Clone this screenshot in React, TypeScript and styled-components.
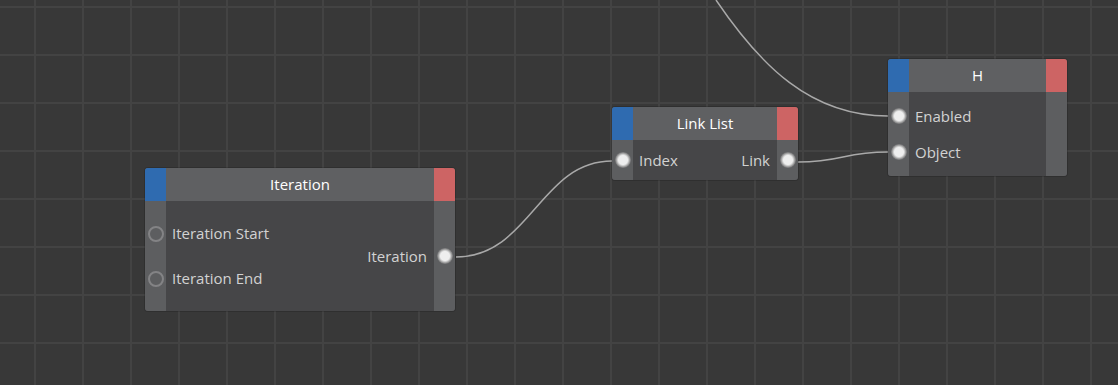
import React from "react";
import styled, {createGlobalStyle} from "styled-components";

const GlobalStyle = createGlobalStyle`
  html, body {
    margin: 0;
    padding: 0;
    background: #383838;
  }
  body {
    font-family: "Open Sans", "Noto Sans", sans-serif;
  }
`;

// canvas with the 48px grid
const Canvas = styled.div`
  position: relative;
  width: 1118px;
  height: 385px;
  overflow: hidden;
  background-color: #383838;
  background-image: linear-gradient(to right, #434343 0 2px, transparent 2px),
  linear-gradient(to bottom, #434343 0 2px, transparent 2px);
  background-size: 48px 48px;
  background-position: 34px 6px;
`;

const Wires = styled.svg`
  position: absolute;
  inset: 0;
  width: 100%;
  height: 100%;

  path {
    fill: none;
    stroke: #a9a9a9;
    stroke-width: 1.5;
  }
`;

const NodeBox = styled.div<{ $x: number; $y: number; $w: number; $h: number }>`
  position: absolute;
  left: ${p => p.$x}px;
  top: ${p => p.$y}px;
  width: ${p => p.$w}px;
  height: ${p => p.$h}px;
  display: flex;
  flex-direction: column;
  border-radius: 3px;
  overflow: hidden;
  box-shadow: 0 0 0 1px rgba(0, 0, 0, 0.15);
`;

const Header = styled.div`
  display: grid;
  grid-template-columns: 21px 1fr 21px;
  height: 33px;
  flex: none;
  background: #5f6062;
`;

const Tab = styled.div<{ $kind: "in" | "out" }>`
  background: ${p => p.$kind === "in" ? "#2f6bb0" : "#cd6464"};
`;

const Title = styled.div`
  display: flex;
  align-items: center;
  justify-content: center;
  color: #ffffff;
  font-size: 15px;
  padding-bottom: 1px;
`;

const Body = styled.div`
  flex: 1;
  display: flex;
  background: #464648;
`;

const PortColumn = styled.div`
  width: 21px;
  flex: none;
  display: flex;
  flex-direction: column;
  justify-content: center;
  align-items: center;
  background: #5d5e60;
`;

const LabelColumn = styled.div<{ $side: "left" | "right" }>`
  flex: ${p => p.$side === "left" ? 1 : "none"};
  display: flex;
  flex-direction: column;
  justify-content: center;
  align-items: ${p => p.$side === "left" ? "flex-start" : "flex-end"};
  padding: ${p => p.$side === "left" ? "0 0 0 6px" : "0 7px 0 0"};
`;

const Row = styled.div<{ $h: number }>`
  height: ${p => p.$h}px;
  display: flex;
  align-items: center;
  justify-content: center;
`;

const Label = styled.span`
  color: #d2d2d2;
  font-size: 15px;
  white-space: nowrap;
  line-height: 1;
`;

const Port = styled.span<{ $linked: boolean }>`
  width: 16px;
  height: 16px;
  box-sizing: border-box;
  border-radius: 50%;
  ${p => p.$linked
    ? `background: radial-gradient(circle at 50% 50%, #eeeeee 0 4.5px, #d0d0d0 5.5px, #9a9a9a 6.8px, #707072 8px);`
    : `border: 2px solid #838385; background: transparent;`}
`;

type PortDef = { name: string; linked: boolean };

type NodeDef = {
  title: string;
  x: number;
  y: number;
  w: number;
  h: number;
  rowH: number;
  inputs: PortDef[];
  outputs: PortDef[];
};

const nodes: NodeDef[] = [
  {
    title: "Iteration", x: 145, y: 168, w: 310, h: 143, rowH: 45,
    inputs: [{name: "Iteration Start", linked: false}, {name: "Iteration End", linked: false}],
    outputs: [{name: "Iteration", linked: true}],
  },
  {
    title: "Link List", x: 612, y: 107, w: 186, h: 73, rowH: 36,
    inputs: [{name: "Index", linked: true}],
    outputs: [{name: "Link", linked: true}],
  },
  {
    title: "H", x: 888, y: 59, w: 179, h: 117, rowH: 36,
    inputs: [{name: "Enabled", linked: true}, {name: "Object", linked: true}],
    outputs: [],
  },
];

const wires = [
  "M 456 257 C 530 257, 540 161, 612 161",
  "M 798 162 C 843 162, 843 152, 888 152",
  "M 716 0 C 760 65, 810 116, 888 116",
];

const NodeView = ({node}: { node: NodeDef }) => (
  <NodeBox $x={node.x} $y={node.y} $w={node.w} $h={node.h}>
    <Header>
      <Tab $kind="in"/>
      <Title>{node.title}</Title>
      <Tab $kind="out"/>
    </Header>
    <Body>
      <PortColumn>
        {node.inputs.map(p => (
          <Row key={p.name} $h={node.rowH}><Port $linked={p.linked}/></Row>
        ))}
      </PortColumn>
      <LabelColumn $side="left">
        {node.inputs.map(p => (
          <Row key={p.name} $h={node.rowH}><Label>{p.name}</Label></Row>
        ))}
      </LabelColumn>
      <LabelColumn $side="right">
        {node.outputs.map(p => (
          <Row key={p.name} $h={node.rowH}><Label>{p.name}</Label></Row>
        ))}
      </LabelColumn>
      <PortColumn>
        {node.outputs.map(p => (
          <Row key={p.name} $h={node.rowH}><Port $linked={p.linked}/></Row>
        ))}
      </PortColumn>
    </Body>
  </NodeBox>
);

export default function App() {
  return (
    <>
      <GlobalStyle/>
      <Canvas>
        <Wires viewBox="0 0 1118 385">
          {wires.map((d, i) => <path key={i} d={d}/>)}
        </Wires>
        {nodes.map(n => <NodeView key={n.title} node={n}/>)}
      </Canvas>
    </>
  );
}
